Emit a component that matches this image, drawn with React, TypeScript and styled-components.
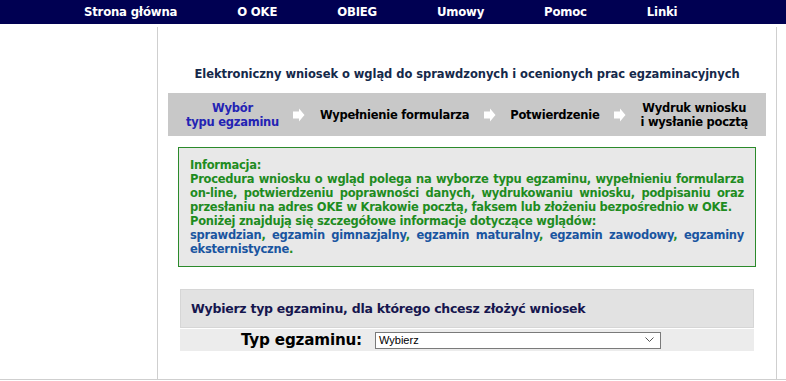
import React from "react";
import styled, { createGlobalStyle } from "styled-components";

const GlobalStyle = createGlobalStyle`
    html, body {
        margin: 0;
        padding: 0;
        background: #ffffff;
        font-family: "DejaVu Sans", Verdana, sans-serif;
    }
`;

const NavBar = styled.nav`
    background-color: #000052;
    height: 24px;
    display: flex;
    align-items: center;
    gap: 60px;
    padding-left: 84px;
`;

const NavLink = styled.a`
    color: #ffffff;
    font-size: 11.7px;
    font-weight: bold;
    text-decoration: none;
    letter-spacing: -0.2px;
`;

const Page = styled.div`
    display: flex;
    padding-top: 3px;
    border-bottom: 1px solid #cfcfcf;
`;

const LeftColumn = styled.div`
    width: 157px;
    flex-shrink: 0;
`;

const MainColumn = styled.main`
    width: 620px;
    height: 352px;
    border-left: 1px solid #cfcfcf;
    border-right: 1px solid #cfcfcf;
    padding: 40px 10px 0;
    box-sizing: border-box;
    display: flex;
    flex-direction: column;
    overflow: hidden;
`;

const Title = styled.h1`
    margin: 0;
    font-size: 11.5px;
    line-height: 14px;
    font-weight: bold;
    color: #15294a;
    text-align: center;
    letter-spacing: -0.05px;
`;

const StepsBar = styled.div`
    margin-top: 12px;
    height: 43px;
    background-color: #c8c8c8;
    display: flex;
    align-items: center;
    justify-content: space-between;
    padding: 0 18px;
`;

const Step = styled.div<{ $active?: boolean }>`
    font-size: 11.5px;
    line-height: 14px;
    font-weight: bold;
    text-align: center;
    letter-spacing: -0.25px;
    color: ${(p) => (p.$active ? "#2323b4" : "#000000")};
`;

const InfoBox = styled.div`
    margin: 11px 10px 0;
    border: 1px solid #2b8a2b;
    background-color: #e8e8e8;
    padding: 10px 11px 10px 11px;
    font-size: 11.5px;
    line-height: 14px;
    font-weight: bold;
    letter-spacing: -0.25px;
    color: #1f8c1f;
    text-align: justify;
`;

const InfoLink = styled.a`
    color: #1a55a0;
    text-decoration: none;
`;

const ChooseHeader = styled.div`
    margin: 22px 12px 0;
    height: 39px;
    box-sizing: border-box;
    border: 1px solid #d6d6d6;
    background-color: #e2e2e2;
    display: flex;
    align-items: center;
    padding-left: 10px;
    font-size: 12.5px;
    font-weight: bold;
    letter-spacing: -0.25px;
    color: #16164e;
`;

const FormRow = styled.div`
    margin: 1px 12px 0;
    height: 22px;
    background-color: #ececec;
    display: grid;
    grid-template-columns: 195px 1fr;
    align-items: center;
`;

const FieldLabel = styled.label`
    text-align: right;
    padding-right: 13px;
    font-size: 15.2px;
    font-weight: bold;
    letter-spacing: -0.2px;
    color: #000000;
`;

const SelectBox = styled.div`
    width: 286px;
    height: 17px;
    box-sizing: border-box;
    border: 1px solid #7a7a7a;
    background: #ffffff;
    display: flex;
    align-items: center;
    justify-content: space-between;
    padding: 0 6px 0 3px;
    font-family: "Liberation Sans", Arial, sans-serif;
    font-size: 11px;
    color: #000000;
`;

const StepArrow = () => (
    <svg width="12" height="14" viewBox="0 0 12 14">
        <polygon points="0,3.5 6,3.5 6,0.5 11.5,7 6,13.5 6,10.5 0,10.5" fill="#ffffff" />
    </svg>
);

const Chevron = () => (
    <svg width="9" height="6" viewBox="0 0 9 6">
        <polyline points="0.5,0.5 4.5,4.5 8.5,0.5" fill="none" stroke="#555" strokeWidth="1" />
    </svg>
);

const navItems = ["Strona główna", "O OKE", "OBIEG", "Umowy", "Pomoc", "Linki"];

const App: React.FC = () => {
    return (
        <>
            <GlobalStyle />
            <NavBar>
                {navItems.map((item) => (
                    <NavLink key={item} href="#">{item}</NavLink>
                ))}
            </NavBar>
            <Page>
                <LeftColumn />
                <MainColumn>
                    <Title>Elektroniczny wniosek o wgląd do sprawdzonych i ocenionych prac egzaminacyjnych</Title>
                    <StepsBar>
                        <Step $active>Wybór<br />typu egzaminu</Step>
                        <StepArrow />
                        <Step>Wypełnienie formularza</Step>
                        <StepArrow />
                        <Step>Potwierdzenie</Step>
                        <StepArrow />
                        <Step>Wydruk wniosku<br />i wysłanie pocztą</Step>
                    </StepsBar>
                    <InfoBox>
                        Informacja:<br />
                        Procedura wniosku o wgląd polega na wyborze typu egzaminu, wypełnieniu formularza on-line, potwierdzeniu poprawności danych, wydrukowaniu wniosku, podpisaniu oraz przesłaniu na adres OKE w Krakowie pocztą, faksem lub złożeniu bezpośrednio w OKE.<br />
                        Poniżej znajdują się szczegółowe informacje dotyczące wglądów:<br />
                        <InfoLink href="#">sprawdzian</InfoLink>, <InfoLink href="#">egzamin gimnazjalny</InfoLink>, <InfoLink href="#">egzamin maturalny</InfoLink>, <InfoLink href="#">egzamin zawodowy</InfoLink>, <InfoLink href="#">egzaminy eksternistyczne</InfoLink>.
                    </InfoBox>
                    <ChooseHeader>Wybierz typ egzaminu, dla którego chcesz złożyć wniosek</ChooseHeader>
                    <FormRow>
                        <FieldLabel>Typ egzaminu:</FieldLabel>
                        <SelectBox>
                            <span>Wybierz</span>
                            <Chevron />
                        </SelectBox>
                    </FormRow>
                </MainColumn>
            </Page>
        </>
    );
};

export default App;
